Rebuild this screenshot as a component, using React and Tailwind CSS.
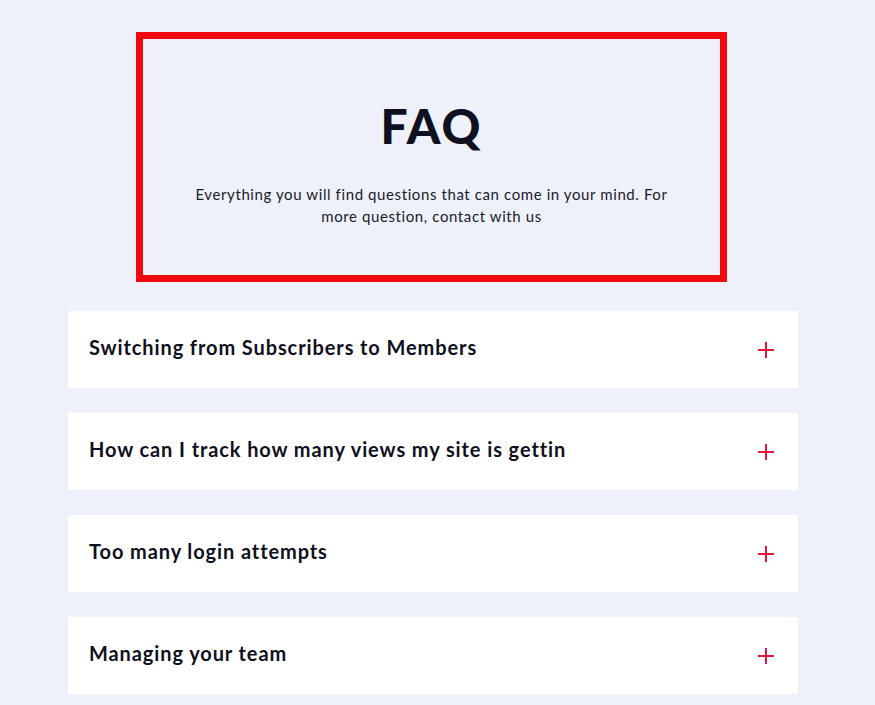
import React, { useState } from 'react';

const questions = [
  'Switching from Subscribers to Members',
  'How can I track how many views my site is gettin',
  'Too many login attempts',
  'Managing your team',
];

const PlusIcon = () => (
  <svg width="16" height="16" viewBox="0 0 16 16" fill="none">
    <path d="M8 0v16M0 8h16" stroke="#e5133f" strokeWidth="2" />
  </svg>
);

const FaqItem = ({ title }) => {
  const [open, setOpen] = useState(false);
  return (
    <div className="bg-white">
      <button
        type="button"
        onClick={() => setOpen(!open)}
        className="w-full h-[77px] flex items-center justify-between pl-[21px] pr-[24px] text-left"
      >
        <span className="text-[20px] font-bold text-[#0f1020] tracking-[0.9px] -mt-[5px]">{title}</span>
        <PlusIcon />
      </button>
    </div>
  );
};

const App = () => {
  return (
    <div className="min-h-screen bg-[#eef1fa] pt-[32px] pl-[68px] font-['Lato',sans-serif]">
      <div className="w-[730px]">
        <div className="ml-[68px] w-[591px] h-[250px] border-[7px] border-[#ee0a0e] flex flex-col items-center pt-[58px]">
          <h1 className="text-[48px] leading-[58px] font-black text-[#0f1020] tracking-[2px]">FAQ</h1>
          <p className="mt-[28px] w-[490px] text-center text-[15px] leading-[22px] text-[#1a1b2b] tracking-[0.6px]">
            Everything you will find questions that can come in your mind. For more question, contact with us
          </p>
        </div>
        <div className="mt-[29px] flex flex-col gap-[25px]">
          {questions.map((q) => (
            <FaqItem key={q} title={q} />
          ))}
        </div>
      </div>
    </div>
  );
};

export default App;
